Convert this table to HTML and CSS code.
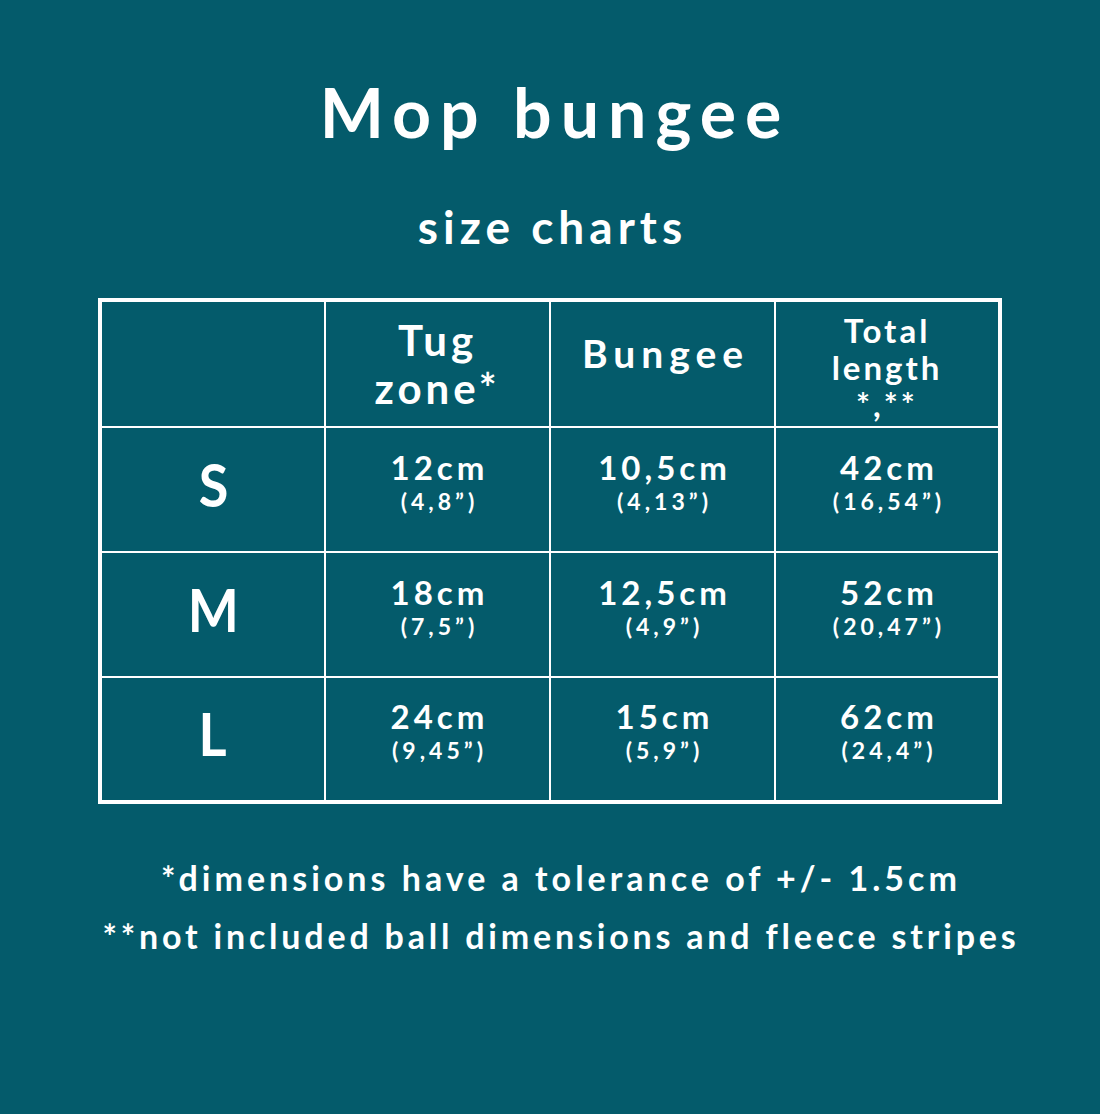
FILE: index.html
```html
<!DOCTYPE html>
<html lang="en">
<head>
<meta charset="utf-8">
<title>Mop bungee size charts</title>
<link rel="stylesheet" href="styles.css">
</head>
<body>
<main class="page">
  <h1 class="title">Mop bungee</h1>
  <h2 class="subtitle">size charts</h2>
  <table class="chart">
    <thead>
      <tr>
        <th class="corner"></th>
        <th class="head head-tug">Tug<br>zone*</th>
        <th class="head head-bungee">Bungee</th>
        <th class="head head-total"><span class="total-wrap">Total length *,**</span></th>
      </tr>
    </thead>
    <tbody>
      <tr>
        <th class="size"><span class="size-letter">S</span></th>
        <td><span class="cm">12cm</span><span class="in">(4,8”)</span></td>
        <td><span class="cm">10,5cm</span><span class="in">(4,13”)</span></td>
        <td><span class="cm">42cm</span><span class="in">(16,54”)</span></td>
      </tr>
      <tr>
        <th class="size"><span class="size-letter">M</span></th>
        <td><span class="cm">18cm</span><span class="in">(7,5”)</span></td>
        <td><span class="cm">12,5cm</span><span class="in">(4,9”)</span></td>
        <td><span class="cm">52cm</span><span class="in">(20,47”)</span></td>
      </tr>
      <tr>
        <th class="size"><span class="size-letter">L</span></th>
        <td><span class="cm">24cm</span><span class="in">(9,45”)</span></td>
        <td><span class="cm">15cm</span><span class="in">(5,9”)</span></td>
        <td><span class="cm">62cm</span><span class="in">(24,4”)</span></td>
      </tr>
    </tbody>
  </table>
  <div class="notes">
    <p class="note note-1">*dimensions have a tolerance of +/- 1.5cm</p>
    <p class="note note-2">**not included ball dimensions and fleece stripes</p>
  </div>
</main>
</body>
</html>
```
FILE: styles.css
```css
html, body {
  margin: 0;
  padding: 0;
}
body {
  background: #045b6b;
  color: #ffffff;
  font-family: "Lato", "DejaVu Sans", sans-serif;
  width: 1100px;
  height: 1114px;
  overflow: hidden;
}
.page {
  display: flex;
  flex-direction: column;
  align-items: center;
}
.title {
  margin: 72px 0 0;
  font-size: 68px;
  line-height: 80px;
  font-weight: 700;
  letter-spacing: 9px;
  padding-left: 10px;
}
.subtitle {
  margin: 47px 0 0;
  font-size: 46px;
  line-height: 56px;
  font-weight: 700;
  letter-spacing: 5px;
  padding-left: 5px;
}
.chart {
  margin-top: 43px;
  width: 904px;
  border-collapse: collapse;
  border: 4px solid #ffffff;
  table-layout: fixed;
}
.chart th, .chart td {
  border: 2px solid #ffffff;
  padding: 0;
  text-align: center;
  vertical-align: middle;
  font-weight: 700;
}
.chart thead tr { height: 127px; }
.chart tbody tr { height: 125px; }
.chart tbody td { padding-bottom: 18px; }
.chart tbody th { padding-bottom: 12px; }
.chart .head {
  letter-spacing: 3px;
}
.chart .head-tug {
  font-size: 42px;
  line-height: 48px;
  letter-spacing: 4px;
}
.chart .head-bungee {
  font-size: 39px;
  line-height: 48px;
  letter-spacing: 6px;
  padding-left: 6px;
  padding-bottom: 22px;
}
.chart .head-total { font-size: 33px; }
.total-wrap {
  display: inline-block;
  width: 140px;
  line-height: 37px;
  padding-top: 8px;
}
.size-letter {
  display: inline-block;
  font-size: 60px;
  font-weight: 700;
  transform: scaleX(0.9);
}
.cm {
  display: block;
  font-size: 33px;
  line-height: 40px;
  letter-spacing: 4px;
  padding-left: 4px;
}
.in {
  display: block;
  font-size: 23px;
  line-height: 28px;
  letter-spacing: 4px;
  padding-left: 4px;
}
.notes {
  margin-top: 56px;
  padding-left: 22px;
  display: flex;
  flex-direction: column;
  align-items: center;
  gap: 22px;
}
.note {
  margin: 0;
  font-size: 34px;
  line-height: 36px;
  font-weight: 700;
  letter-spacing: 4px;
}
.note-2 { letter-spacing: 3.8px; }
```
